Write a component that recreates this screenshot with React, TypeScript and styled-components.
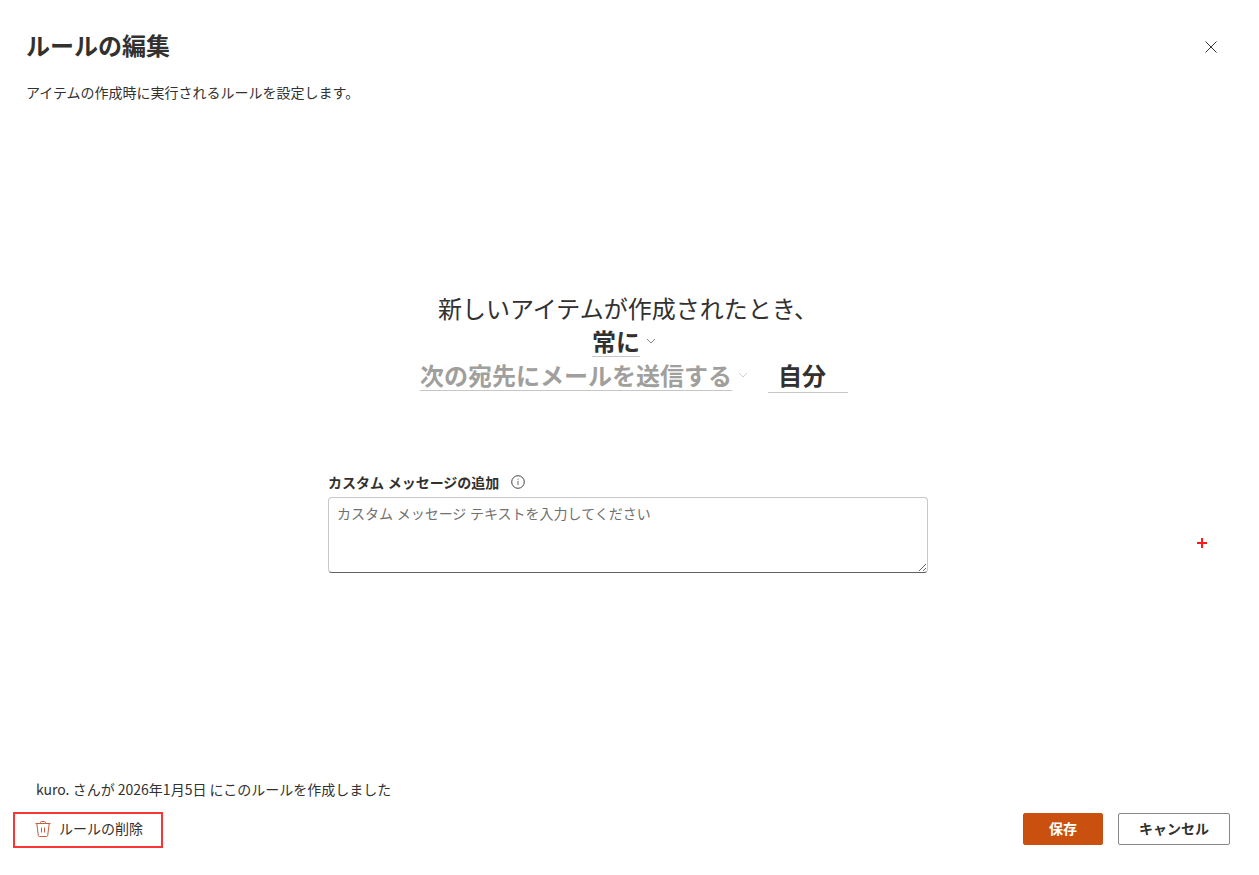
import React from "react";
import styled, { createGlobalStyle } from "styled-components";

const GlobalStyle = createGlobalStyle`
  *, *::before, *::after { box-sizing: border-box; }
  body {
    margin: 0;
    background: #ffffff;
    color: #323130;
    font-family: "Open Sans", "Noto Sans CJK JP", sans-serif;
    font-size: 14px;
    line-height: 20px;
  }
  button, input, select, textarea { font-family: inherit; color: inherit; }
`;

const Dialog = styled.form`
  position: relative;
  display: flex;
  flex-direction: column;
  min-height: 100vh;
  padding: 30px 29px 30px 26px;
`;

const Header = styled.header`
  display: flex;
  justify-content: space-between;
  align-items: flex-start;
`;

const Title = styled.h1`
  margin: 0 0 21px;
  font-size: 24px;
  line-height: 32px;
  font-weight: 700;
`;

const Description = styled.p`
  margin: 0;
`;

const CloseButton = styled.button`
  display: grid;
  place-items: center;
  width: 38px;
  height: 34px;
  padding: 0;
  border: 0;
  background: transparent;
`;

const Main = styled.main`
  flex: 1;
  display: flex;
  flex-direction: column;
  align-items: center;
  justify-content: center;
  gap: 79px;
  padding-bottom: 18px;
`;

const Sentence = styled.div`
  display: flex;
  flex-direction: column;
  align-items: center;
  font-size: 24px;
  line-height: 34px;
`;

const SentenceText = styled.span`
  white-space: nowrap;
`;

const SentenceRow = styled.div<{ $indent?: boolean }>`
  display: flex;
  align-items: flex-start;
  height: 34px;
  padding-left: ${(p) => (p.$indent ? "12px" : "0")};
`;

const Picker = styled.label`
  display: flex;
  align-items: center;
`;

const PickerSelect = styled.select<{ $chars: number }>`
  appearance: none;
  width: ${(p) => p.$chars}em;
  height: 31px;
  padding: 1px 0 0;
  border: 0;
  border-bottom: 1px solid #c8c6c4;
  border-radius: 0;
  background: transparent;
  font-size: 24px;
  line-height: 29px;
  font-weight: 700;
  &:disabled {
    color: #a19f9d;
    opacity: 1;
  }
`;

const Chevron = styled.svg<{ $muted?: boolean }>`
  width: 10px;
  height: 10px;
  margin: 0 8px 0 6px;
  fill: none;
  stroke: ${(p) => (p.$muted ? "#d2d0ce" : "#8a8886")};
`;

const Recipient = styled.input`
  width: 80px;
  height: 33px;
  margin-left: 12px;
  padding: 0 10px 2px;
  border: 0;
  border-bottom: 1px solid #c8c6c4;
  background: transparent;
  font-size: 24px;
  line-height: 30px;
  font-weight: 700;
`;

const Message = styled.div`
  display: flex;
  flex-direction: column;
  gap: 4px;
  width: 100%;
  max-width: 600px;
`;

const MessageHeading = styled.div`
  display: flex;
  align-items: center;
  gap: 12px;
`;

const MessageLabel = styled.label`
  font-weight: 700;
`;

const InfoButton = styled.button`
  display: grid;
  place-items: center;
  padding: 0 0 2px;
  border: 0;
  background: transparent;
`;

const MessageBox = styled.textarea`
  display: block;
  width: 100%;
  height: 76px;
  padding: 6px 8px;
  border: 1px solid #c8c8c8;
  border-bottom-color: #616161;
  border-radius: 4px;
  background: #ffffff;
  font-size: 14px;
  line-height: 20px;
  resize: vertical;
  &::placeholder {
    color: #707070;
    opacity: 1;
  }
`;

const Footer = styled.footer`
  display: flex;
  flex-direction: column;
  gap: 14px;
`;

const Created = styled.p`
  margin: 0;
  padding-left: 10px;
  font-family: "Noto Sans CJK JP", sans-serif;
`;

const Actions = styled.div`
  display: flex;
  align-items: flex-start;
  justify-content: space-between;
  height: 32px;
`;

const ActionGroup = styled.div`
  display: flex;
  gap: 15px;
`;

const DeleteButton = styled.button`
  display: flex;
  align-items: center;
  gap: 8px;
  height: 36px;
  margin: -1px 0 0 -13px;
  padding: 0 18px 2px 20px;
  border: 2px solid #fb3434;
  background: transparent;
  font-size: 14px;
  line-height: 20px;
`;

const FooterButton = styled.button<{ $primary?: boolean }>`
  min-width: 80px;
  height: 32px;
  padding: 0 20px;
  border: 1px solid ${(p) => (p.$primary ? "#ca5010" : "#8a8886")};
  border-radius: 2px;
  background: ${(p) => (p.$primary ? "#ca5010" : "#ffffff")};
  color: ${(p) => (p.$primary ? "#ffffff" : "#323130")};
  font-size: 14px;
  line-height: 20px;
  font-weight: 700;
`;

const Marker = styled.svg`
  position: absolute;
  right: 52px;
  top: 62%;
  transform: translateY(-50%);
`;

const ChevronIcon = ({ muted }: { muted?: boolean }) => (
  <Chevron viewBox="0 0 10 10" $muted={muted} aria-hidden="true">
    <path d="M1 3 L5 7 L9 3" />
  </Chevron>
);

export default function App() {
  return (
    <>
      <GlobalStyle />
      <Dialog onSubmit={(e) => e.preventDefault()}>
        <Header>
          <div>
            <Title>ルールの編集</Title>
            <Description>アイテムの作成時に実行されるルールを設定します。</Description>
          </div>
          <CloseButton type="button" aria-label="閉じる">
            <svg width="12" height="12" viewBox="0 0 12 12" fill="none" stroke="#323130">
              <path d="M0.5 0.5 L11.5 11.5 M11.5 0.5 L0.5 11.5" />
            </svg>
          </CloseButton>
        </Header>

        <Main>
          <Sentence>
            <SentenceText>新しいアイテムが作成されたとき、</SentenceText>
            <SentenceRow>
              <Picker>
                <PickerSelect $chars={2} aria-label="条件">
                  <option>常に</option>
                </PickerSelect>
                <ChevronIcon />
              </Picker>
            </SentenceRow>
            <SentenceRow $indent>
              <Picker>
                <PickerSelect $chars={13} aria-label="操作" disabled>
                  <option>次の宛先にメールを送信する</option>
                </PickerSelect>
                <ChevronIcon muted />
              </Picker>
              <Recipient aria-label="宛先" defaultValue="自分" />
            </SentenceRow>
          </Sentence>

          <Message>
            <MessageHeading>
              <MessageLabel htmlFor="message">カスタム メッセージの追加</MessageLabel>
              <InfoButton type="button" aria-label="情報">
                <svg width="14" height="14" viewBox="0 0 14 14" fill="none" stroke="#323130">
                  <circle cx="7" cy="7" r="6.3" strokeWidth="0.9" />
                  <path d="M7 5.8 V10.2 M7 3.6 V4.7" strokeWidth="0.9" stroke="#5f5d5b" />
                </svg>
              </InfoButton>
            </MessageHeading>
            <MessageBox id="message" placeholder="カスタム メッセージ テキストを入力してください" />
          </Message>
        </Main>

        <Footer>
          <Created>kuro. さんが 2026年1月5日 にこのルールを作成しました</Created>
          <Actions>
            <DeleteButton type="button">
              <svg width="16" height="16" viewBox="0 0 16 16" fill="none" stroke="#c4603f">
                <path d="M0.5 2.5 H15.5 M5.5 2.5 V1.5 Q5.5 0.5 6.5 0.5 H9.5 Q10.5 0.5 10.5 1.5 V2.5 M1.8 2.5 L3.3 14.5 Q3.5 15.5 4.5 15.5 H11.5 Q12.5 15.5 12.7 14.5 L14.2 2.5 M6.5 6.5 V11.5 M9.5 6.5 V11.5" />
              </svg>
              ルールの削除
            </DeleteButton>
            <ActionGroup>
              <FooterButton type="submit" $primary>保存</FooterButton>
              <FooterButton type="button">キャンセル</FooterButton>
            </ActionGroup>
          </Actions>
        </Footer>

        <Marker width="10" height="10" viewBox="0 0 10 10" stroke="#ff1a1a" strokeWidth="2" aria-hidden="true">
          <path d="M5 0 V10 M0 5 H10" />
        </Marker>
      </Dialog>
    </>
  );
}
